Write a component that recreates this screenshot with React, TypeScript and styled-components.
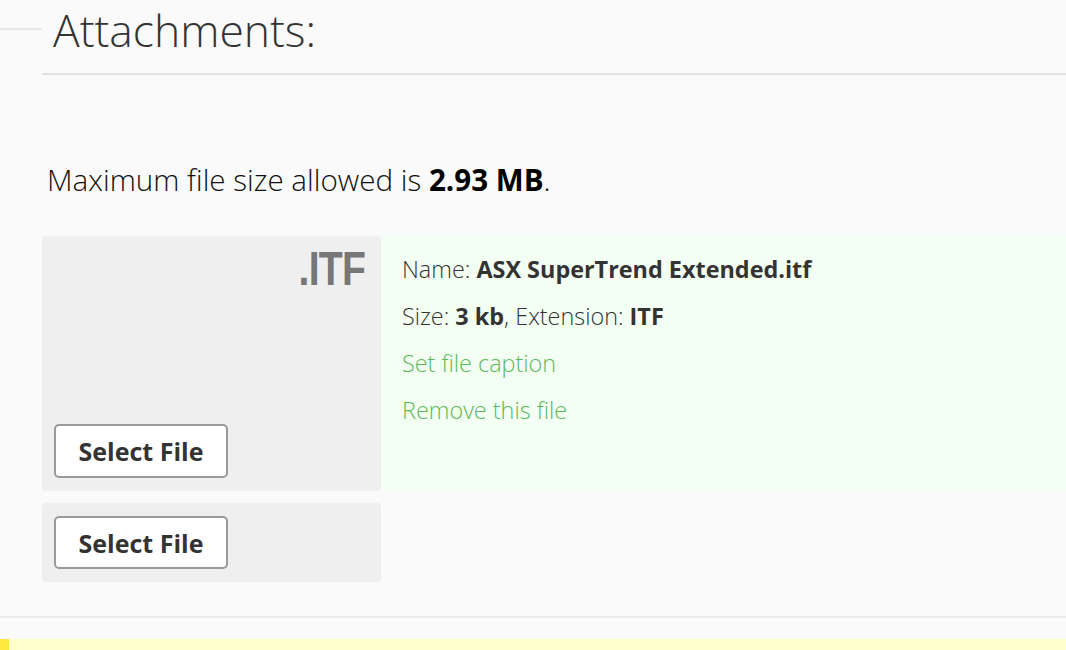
import React from "react";
import styled, { createGlobalStyle } from "styled-components";

const Global = createGlobalStyle`
  html, body { margin: 0; padding: 0; background: #fafafa; }
  body { font-family: "Open Sans", "Liberation Sans", sans-serif; color: #333; overflow: hidden; }
  * { box-sizing: border-box; }
`;

const Page = styled.div`
  width: 1066px;
  display: flex;
  flex-direction: column;
  background: #fafafa;
  & > * { flex-shrink: 0; }
`;

const Header = styled.div`
  display: flex;
  height: 75px;
`;

const Stub = styled.div`
  width: 42px;
  height: 2px;
  margin-top: 28px;
  background: #e8e8e8;
`;

const Title = styled.h2`
  flex: 1;
  margin: 0;
  padding: 0 0 0 11px;
  border-bottom: 2px solid #e2e2e2;
  font-weight: 300;
  font-size: 44.4px;
  line-height: 61px;
  color: #333;
`;

const Body = styled.div`
  padding: 0 0 0 42px;
  display: flex;
  flex-direction: column;
`;

const Limit = styled.p`
  margin: 86px 0 0 5px;
  font-size: 29.6px;
  font-weight: 300;
  line-height: 38px;
  color: #111;
  b { font-weight: 700; color: #000; }
`;

const Cards = styled.div`
  margin-top: 37px;
  display: flex;
  flex-direction: column;
  gap: 12px;
`;

const Card = styled.div`
  display: flex;
`;

const Preview = styled.div<{ $tall?: boolean }>`
  width: 339px;
  height: ${(p) => (p.$tall ? "255px" : "79px")};
  background: #efefef;
  border-radius: 4px;
  padding: ${(p) => (p.$tall ? "9px 16px 13px 12px" : "13px 12px")};
  display: flex;
  flex-direction: column;
  justify-content: space-between;
`;

const Ext = styled.div`
  align-self: flex-end;
  font-family: "Liberation Sans", Arial, sans-serif;
  font-weight: 700;
  font-size: 49px;
  line-height: 46px;
  letter-spacing: -1px;
  color: #777;
  transform: scaleX(0.8);
  transform-origin: right center;
`;

const SelectButton = styled.button`
  width: 174px;
  height: 54px;
  background: #fff;
  border: 2px solid #9a9a9a;
  border-radius: 5px;
  font-family: "Open Sans", sans-serif;
  font-weight: 700;
  font-size: 25px;
  color: #333;
  cursor: pointer;
`;

const Info = styled.div`
  flex: 1;
  height: 255px;
  background: #f3fff3;
  padding: 19px 0 0 21px;
  display: flex;
  flex-direction: column;
  gap: 19px;
`;

const Line = styled.div<{ $link?: boolean }>`
  font-size: 23.4px;
  line-height: 28px;
  font-weight: 300;
  color: ${(p) => (p.$link ? "#5cb85c" : "#333")};
  b { font-weight: 700; color: #333; }
`;

const Divider = styled.div`
  margin-top: 34px;
  height: 2px;
  background: #ebebeb;
`;

const Notice = styled.div`
  margin-top: 21px;
  height: 12px;
  background: #ffffcc;
  border-left: 9px solid #ffe93c;
`;

export default function App() {
  return (
    <Page>
      <Global />
      <Header>
        <Stub />
        <Title>Attachments:</Title>
      </Header>
      <Body>
        <Limit>
          Maximum file size allowed is <b>2.93 MB</b>.
        </Limit>
        <Cards>
          <Card>
            <Preview $tall>
              <Ext>.ITF</Ext>
              <SelectButton>Select File</SelectButton>
            </Preview>
            <Info>
              <Line>
                Name: <b>ASX SuperTrend Extended.itf</b>
              </Line>
              <Line>
                Size: <b>3 kb</b>, Extension: <b>ITF</b>
              </Line>
              <Line $link>Set file caption</Line>
              <Line $link>Remove this file</Line>
            </Info>
          </Card>
          <Card>
            <Preview>
              <SelectButton>Select File</SelectButton>
            </Preview>
          </Card>
        </Cards>
      </Body>
      <Divider />
      <Notice />
    </Page>
  );
}
